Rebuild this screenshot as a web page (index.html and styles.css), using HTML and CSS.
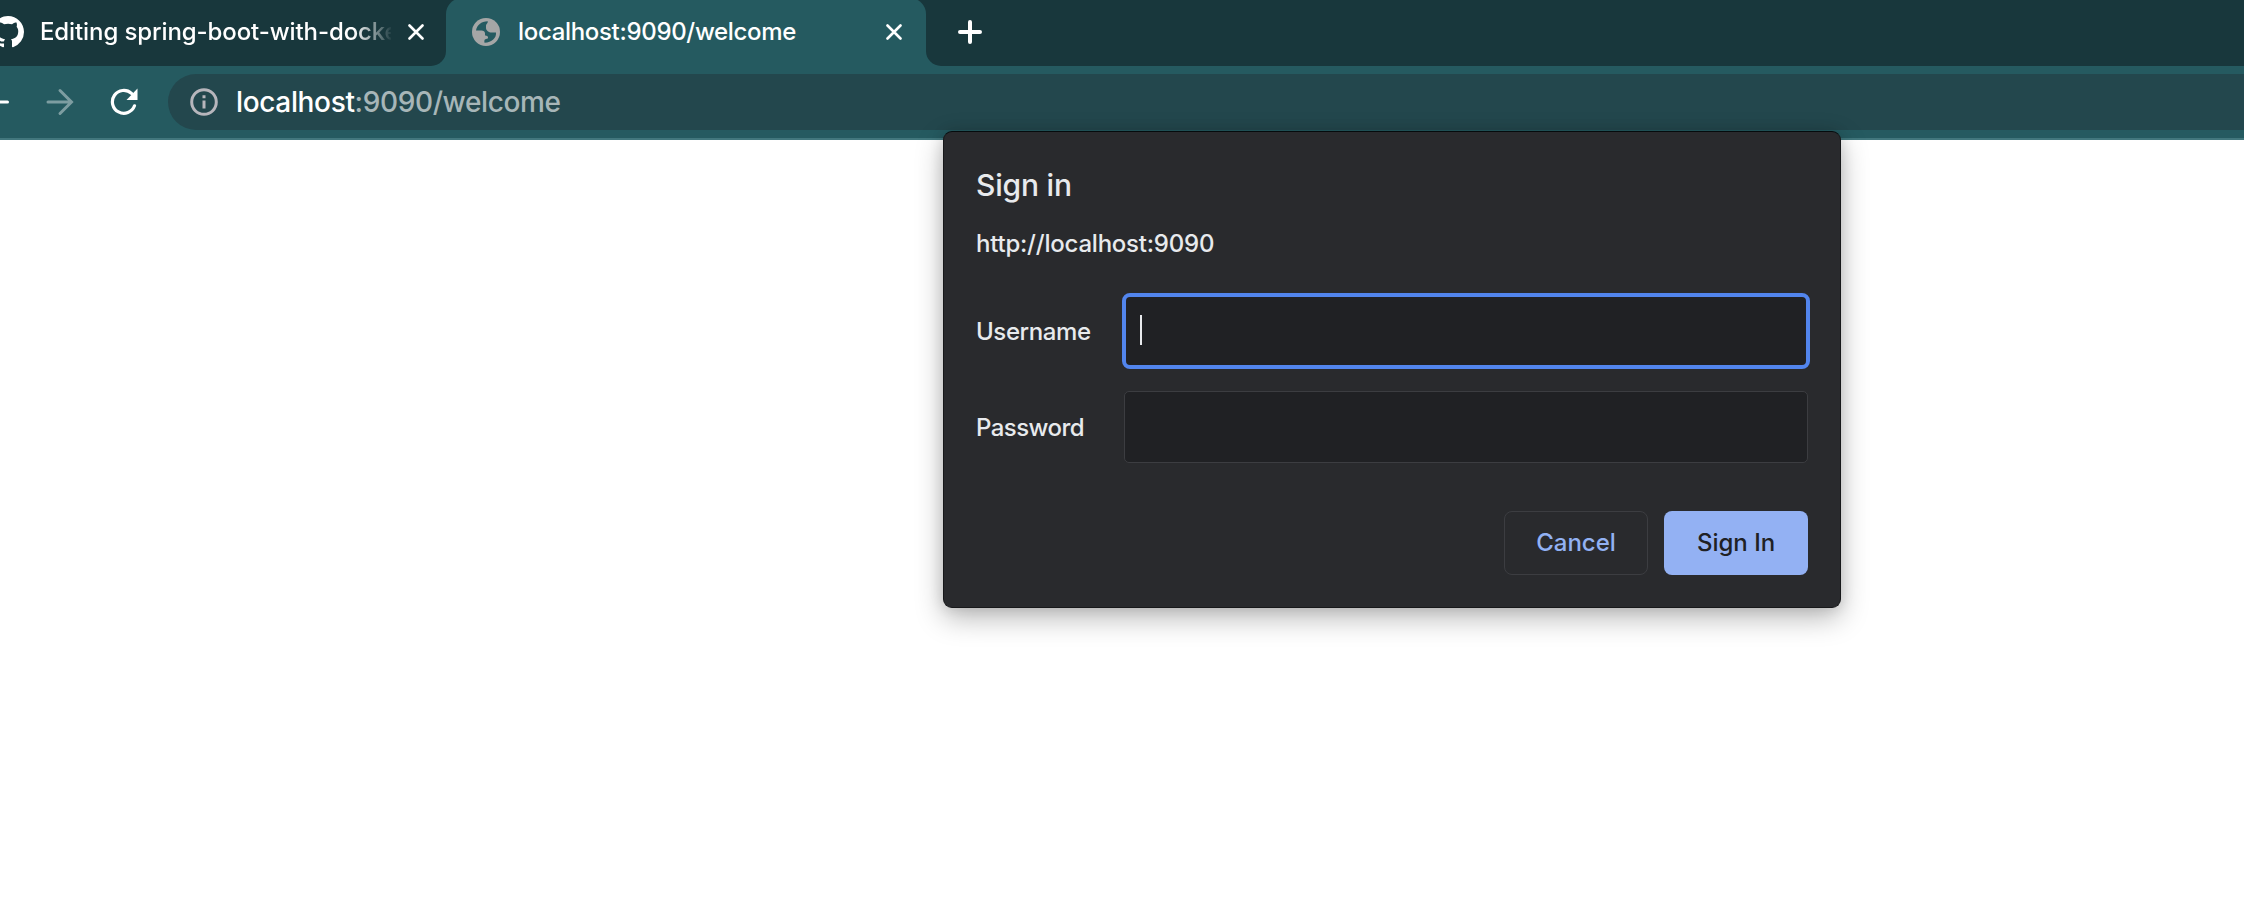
FILE: index.html
```html
<!DOCTYPE html>
<html lang="en">
<head>
<meta charset="utf-8">
<title>localhost:9090/welcome</title>
<link rel="stylesheet" href="styles.css">
</head>
<body>
<header class="browser">
  <div class="tabs">
    <div class="tab tab-github">
      <svg class="github" viewBox="0 0 16 16"><path d="M8 0C3.58 0 0 3.58 0 8c0 3.54 2.29 6.53 5.47 7.59.4.07.55-.17.55-.38 0-.19-.01-.82-.01-1.49-2.01.37-2.53-.49-2.69-.94-.09-.23-.48-.94-.82-1.13-.28-.15-.68-.52-.01-.53.63-.01 1.08.58 1.23.82.72 1.21 1.87.87 2.33.66.07-.52.28-.87.51-1.07-1.78-.2-3.64-.89-3.64-3.95 0-.87.31-1.59.82-2.15-.08-.2-.36-1.02.08-2.12 0 0 .67-.21 2.2.82.64-.18 1.32-.27 2-.27s1.36.09 2 .27c1.53-1.04 2.2-.82 2.2-.82.44 1.1.16 1.92.08 2.12.51.56.82 1.27.82 2.15 0 3.07-1.87 3.75-3.65 3.95.29.25.54.73.54 1.48 0 1.07-.01 1.93-.01 2.2 0 .21.15.46.55.38A8.01 8.01 0 0 0 16 8c0-4.42-3.58-8-8-8z"/></svg>
      <span class="tab-title faded">Editing spring-boot-with-docke</span>
      <svg class="close" viewBox="0 0 16 16"><path d="M1.5 1.5l13 13M14.5 1.5l-13 13"/></svg>
    </div>
    <div class="tab-slot">
      <div class="tab tab-active">
        <svg class="globe" viewBox="0 0 28 28"><circle cx="14" cy="14" r="14"/><path d="M4 12.5C5 7 9 3.5 15.8 3.2C16.2 5 14 6 14 7.5V10C14 12.5 17 14.5 19.5 14.5H24C24.5 20 20 24.5 12.5 24.7C12 21.5 13 21 15.8 20.5C16.8 18.5 15 17.5 13 17.5V15.5C13 13.5 11.5 12.5 9.5 12.5Z"/></svg>
        <span class="tab-title">localhost:9090/welcome</span>
        <svg class="close" viewBox="0 0 16 16"><path d="M1.5 1.5l13 13M14.5 1.5l-13 13"/></svg>
      </div>
    </div>
    <div class="tab-rest">
      <svg class="plus" viewBox="0 0 24 24"><path d="M12 2v20M2 12h20"/></svg>
    </div>
  </div>
  <div class="toolbar">
    <svg class="back" viewBox="0 0 9 28"><path d="M0 14h7.5"/></svg>
    <svg class="forward" viewBox="0 0 28 28"><path d="M2 14h23M14 2.5L25.5 14L14 25.5"/></svg>
    <svg class="reload" viewBox="0 0 28 28"><path class="arc" d="M21.5 5.4A11.4 11.4 0 1 0 24.5 17.8"/><path class="head" d="M27.5 .5V12H16.5Z"/></svg>
    <div class="omnibox">
      <svg class="info" viewBox="0 0 28 28"><circle cx="14" cy="14" r="12.3"/><path d="M14 12.5v8M14 7.3v3"/></svg>
      <span class="url"><span class="host">localhost</span><span class="path">:9090/welcome</span></span>
    </div>
  </div>
</header>
<form class="dialog">
  <h1 class="title">Sign in</h1>
  <p class="origin">http://localhost:9090</p>
  <div class="row">
    <span class="label user">Username</span>
    <div class="field focused"><span class="caret"></span></div>
  </div>
  <div class="row">
    <span class="label pass">Password</span>
    <div class="field"></div>
  </div>
  <div class="actions">
    <button class="button cancel" type="button">Cancel</button>
    <button class="button submit" type="button">Sign In</button>
  </div>
</form>
</body>
</html>
```
FILE: styles.css
```css
* { box-sizing: border-box; }
body {
  margin: 0;
  height: 918px;
  overflow: hidden;
  background: #fff;
  font-family: Inter, "Liberation Sans", sans-serif;
  font-weight: 450;
}
svg { display: block; flex: none; fill: none; }
.browser { height: 140px; background: #255a60; border-bottom: 2px solid #42777d; }
.tabs { display: flex; height: 66px; }
.tab { display: flex; align-items: center; height: 66px; padding-bottom: 2px; color: #fff; }
.tab-github { width: 446px; background: #18373c; border-radius: 0 0 15px 0; }
.github { width: 32px; height: 32px; margin-left: -8px; fill: #fff; }
.tab-title { margin-left: 16px; font-size: 24px; line-height: 32px; letter-spacing: -0.32px; white-space: nowrap; }
.faded {
  width: 351px;
  letter-spacing: -0.1px;
  -webkit-mask-image: linear-gradient(90deg, #000 314px, transparent 353px);
  mask-image: linear-gradient(90deg, #000 314px, transparent 353px);
}
.close { width: 16px; height: 16px; stroke: #fff; stroke-width: 2.6; stroke-linecap: round; }
.tab-github .close { margin-left: 17px; }
.tab-slot { width: 480px; height: 66px; background: linear-gradient(#18373c 30px, #255a60 30px); overflow: hidden; }
.tab-active { background: #255a60; margin-top: -2px; height: 68px; padding: 2px 24px 2px 26px; border-radius: 16px 16px 0 0; }
.tab-active .tab-title { margin-left: 18px; }
.tab-active .close { margin-left: auto; }
.globe { width: 28px; height: 28px; fill: #a5a6a6; }
.globe path { fill: #255a60; }
.tab-rest { flex: 1; background: #18373c; border-radius: 0 0 0 15px; padding: 20px 0 0 32px; }
.plus { width: 24px; height: 24px; stroke: #fff; stroke-width: 4; stroke-linecap: round; }
.toolbar { display: flex; height: 72px; align-items: center; }
.back { width: 9px; height: 28px; stroke: #fff; stroke-width: 3; stroke-linecap: round; }
.forward { width: 28px; height: 28px; margin-left: 37px; stroke: #7d9da1; stroke-width: 3; stroke-linecap: round; }
.reload { width: 28px; height: 28px; margin-left: 36px; }
.arc { stroke: #fff; stroke-width: 3.2; stroke-linecap: round; }
.head { fill: #fff; }
.omnibox { display: flex; align-items: center; flex: 1; height: 56px; margin-left: 30px; padding-left: 22px; background: #23474d; border-radius: 28px 0 0 28px; }
.info { width: 28px; height: 28px; stroke: #b7b6bc; stroke-width: 3; }
.url { margin-left: 18px; font-size: 28px; line-height: 40px; letter-spacing: -0.37px; white-space: nowrap; }
.host { color: #fff; font-weight: 500; letter-spacing: -0.35px; }
.path { color: #a7b6b8; }
.dialog {
  position: absolute;
  left: 943px;
  top: 131px;
  width: 898px;
  height: 477px;
  padding: 31px 32px 31px 32px;
  color: #e8eaed;
  background: #292a2d;
  border: 1px solid #17181a;
  border-top-color: #050b0d;
  border-radius: 9px;
  box-shadow: 0 10px 28px rgba(0, 0, 0, .28), 0 0 14px rgba(0, 0, 0, .12);
}
.title { margin: 0; font-size: 30px; line-height: 44px; font-weight: 450; letter-spacing: -0.2px; }
.origin { margin: 21px 0 33px; font-size: 24px; line-height: 32px; letter-spacing: -0.22px; }
.row { display: flex; align-items: center; justify-content: space-between; height: 76px; }
.row + .row { margin-top: 20px; }
.label { padding-top: 2px; font-size: 24px; line-height: 32px; }
.user { letter-spacing: -0.4px; }
.pass { letter-spacing: -0.55px; }
.field { display: flex; align-items: center; width: 684px; height: 72px; background: #202124; border: 1px solid #3c3d41; border-radius: 5px; }
.focused { width: 688px; height: 76px; margin-right: -2px; padding-left: 14px; border: 4px solid #5285ed; border-radius: 8px; }
.caret { width: 2px; height: 30px; margin-top: -2px; background: #e8eaed; }
.actions { display: flex; justify-content: flex-end; gap: 16px; margin-top: 46px; }
.button { width: 144px; height: 64px; padding: 0; font: 500 24px/30px Inter, "Liberation Sans", sans-serif; border-radius: 8px; }
.cancel { color: #92b1f3; background: transparent; border: 1px solid #3c3d41; }
.submit { color: #202124; background: #93b1f3; border: 0; }
```
